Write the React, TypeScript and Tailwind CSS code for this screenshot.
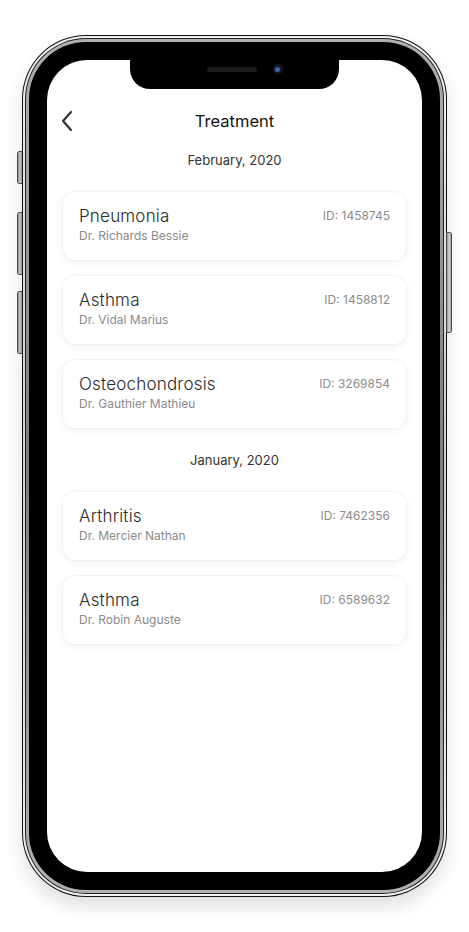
import React from "react";

type Record = {
  name: string;
  doctor: string;
  id: string;
};

const groups: { month: string; items: Record[] }[] = [
  {
    month: "February, 2020",
    items: [
      { name: "Pneumonia", doctor: "Dr. Richards Bessie", id: "1458745" },
      { name: "Asthma", doctor: "Dr. Vidal Marius", id: "1458812" },
      { name: "Osteochondrosis", doctor: "Dr. Gauthier Mathieu", id: "3269854" },
    ],
  },
  {
    month: "January, 2020",
    items: [
      { name: "Arthritis", doctor: "Dr. Mercier Nathan", id: "7462356" },
      { name: "Asthma", doctor: "Dr. Robin Auguste", id: "6589632" },
    ],
  },
];

const sideButton = "w-[4px] bg-gradient-to-r from-[#8f8f8f] via-[#d6d6d6] to-[#9a9a9a] ring-1 ring-[#4a4a4a]";

const TreatmentCard = ({ item }: { item: Record }) => (
  <div className="h-[68px] rounded-[12px] bg-white px-4 pt-[14px] shadow-[0_2px_10px_rgba(0,0,0,0.06)] ring-1 ring-black/[0.03]">
    <div className="flex items-center justify-between">
      <span className="text-[17px] leading-[20px] font-light tracking-[0.2px] text-[#2a2a2a]">{item.name}</span>
      <span className="text-[12px] leading-[16px] text-[#8c8c8c]">ID: {item.id}</span>
    </div>
    <p className="mt-[2px] text-[12px] leading-[16px] text-[#8a8a8a]">{item.doctor}</p>
  </div>
);

const Screen = () => (
  <div className="relative h-full w-full overflow-hidden rounded-[40px] bg-white">
    {/* Notch */}
    <div className="absolute left-[83px] top-0 flex h-[29px] w-[209px] items-center justify-center gap-[16px] rounded-b-[20px] bg-black pb-[11px] pl-[20px]">
      <div className="h-[5px] w-[50px] rounded-full bg-[#1c1c1c]" />
      <div className="flex h-[10px] w-[10px] items-center justify-center rounded-full bg-[#17172a]">
        <div className="h-[5px] w-[5px] rounded-full bg-[#3a62b0]" />
      </div>
    </div>

    <div className="flex flex-col px-4 pt-[49px]">
      {/* Header */}
      <div className="relative flex h-[24px] items-center justify-center">
        <button className="absolute left-[-8px] top-0 flex h-[24px] w-[24px] items-center justify-center">
          <svg width="14" height="22" viewBox="0 0 14 22" fill="none">
            <path d="M11 2 L3 11 L11 20" stroke="#333" strokeWidth="2.2" strokeLinecap="round" strokeLinejoin="round" />
          </svg>
        </button>
        <h1 className="text-[16.5px] font-normal text-[#111]">Treatment</h1>
      </div>

      {groups.map((group, gi) => (
        <div key={group.month} className={gi === 0 ? "mt-[19px]" : "mt-[24px]"}>
          <p className="h-[16px] text-center text-[13px] leading-[16px] text-[#333]">{group.month}</p>
          <div className="mt-[24px] flex flex-col gap-4">
            {group.items.map((item) => (
              <TreatmentCard key={item.id} item={item} />
            ))}
          </div>
        </div>
      ))}
    </div>
  </div>
);

export default function App() {
  return (
    <div
      className="flex h-[932px] w-[469px] items-start bg-white pl-[18px] pt-[35px]"
      style={{ fontFamily: "Inter, 'Noto Sans', sans-serif" }}
    >
      {/* Left side buttons */}
      <div className="flex flex-col pt-[117px]">
        <div className={`${sideButton} h-[31px] rounded-l-[2px]`} />
        <div className={`${sideButton} mt-[30px] h-[61px] rounded-l-[2px]`} />
        <div className={`${sideButton} mt-[18px] h-[61px] rounded-l-[2px]`} />
      </div>

      {/* Phone frame */}
      <div className="h-[862px] w-[425px] rounded-[64px] bg-[#111] p-[1px] shadow-[0_10px_18px_rgba(0,0,0,0.12)]">
        <div className="h-full w-full rounded-[63px] bg-gradient-to-b from-[#f0f0f0] via-[#cfcfcf] to-[#f0f0f0] p-[2px]">
          <div className="h-full w-full rounded-[61px] bg-[#202020] p-[1px]">
            <div className="h-full w-full rounded-[60px] bg-gradient-to-b from-[#b0b0b0] via-[#7c7c7c] to-[#b0b0b0] p-[3px]">
              <div className="h-full w-full rounded-[57px] bg-black p-[18px]">
                <Screen />
              </div>
            </div>
          </div>
        </div>
      </div>

      {/* Right side button */}
      <div className="flex flex-col pt-[198px]">
        <div className={`${sideButton} h-[99px] rounded-r-[2px]`} />
      </div>
    </div>
  );
}
